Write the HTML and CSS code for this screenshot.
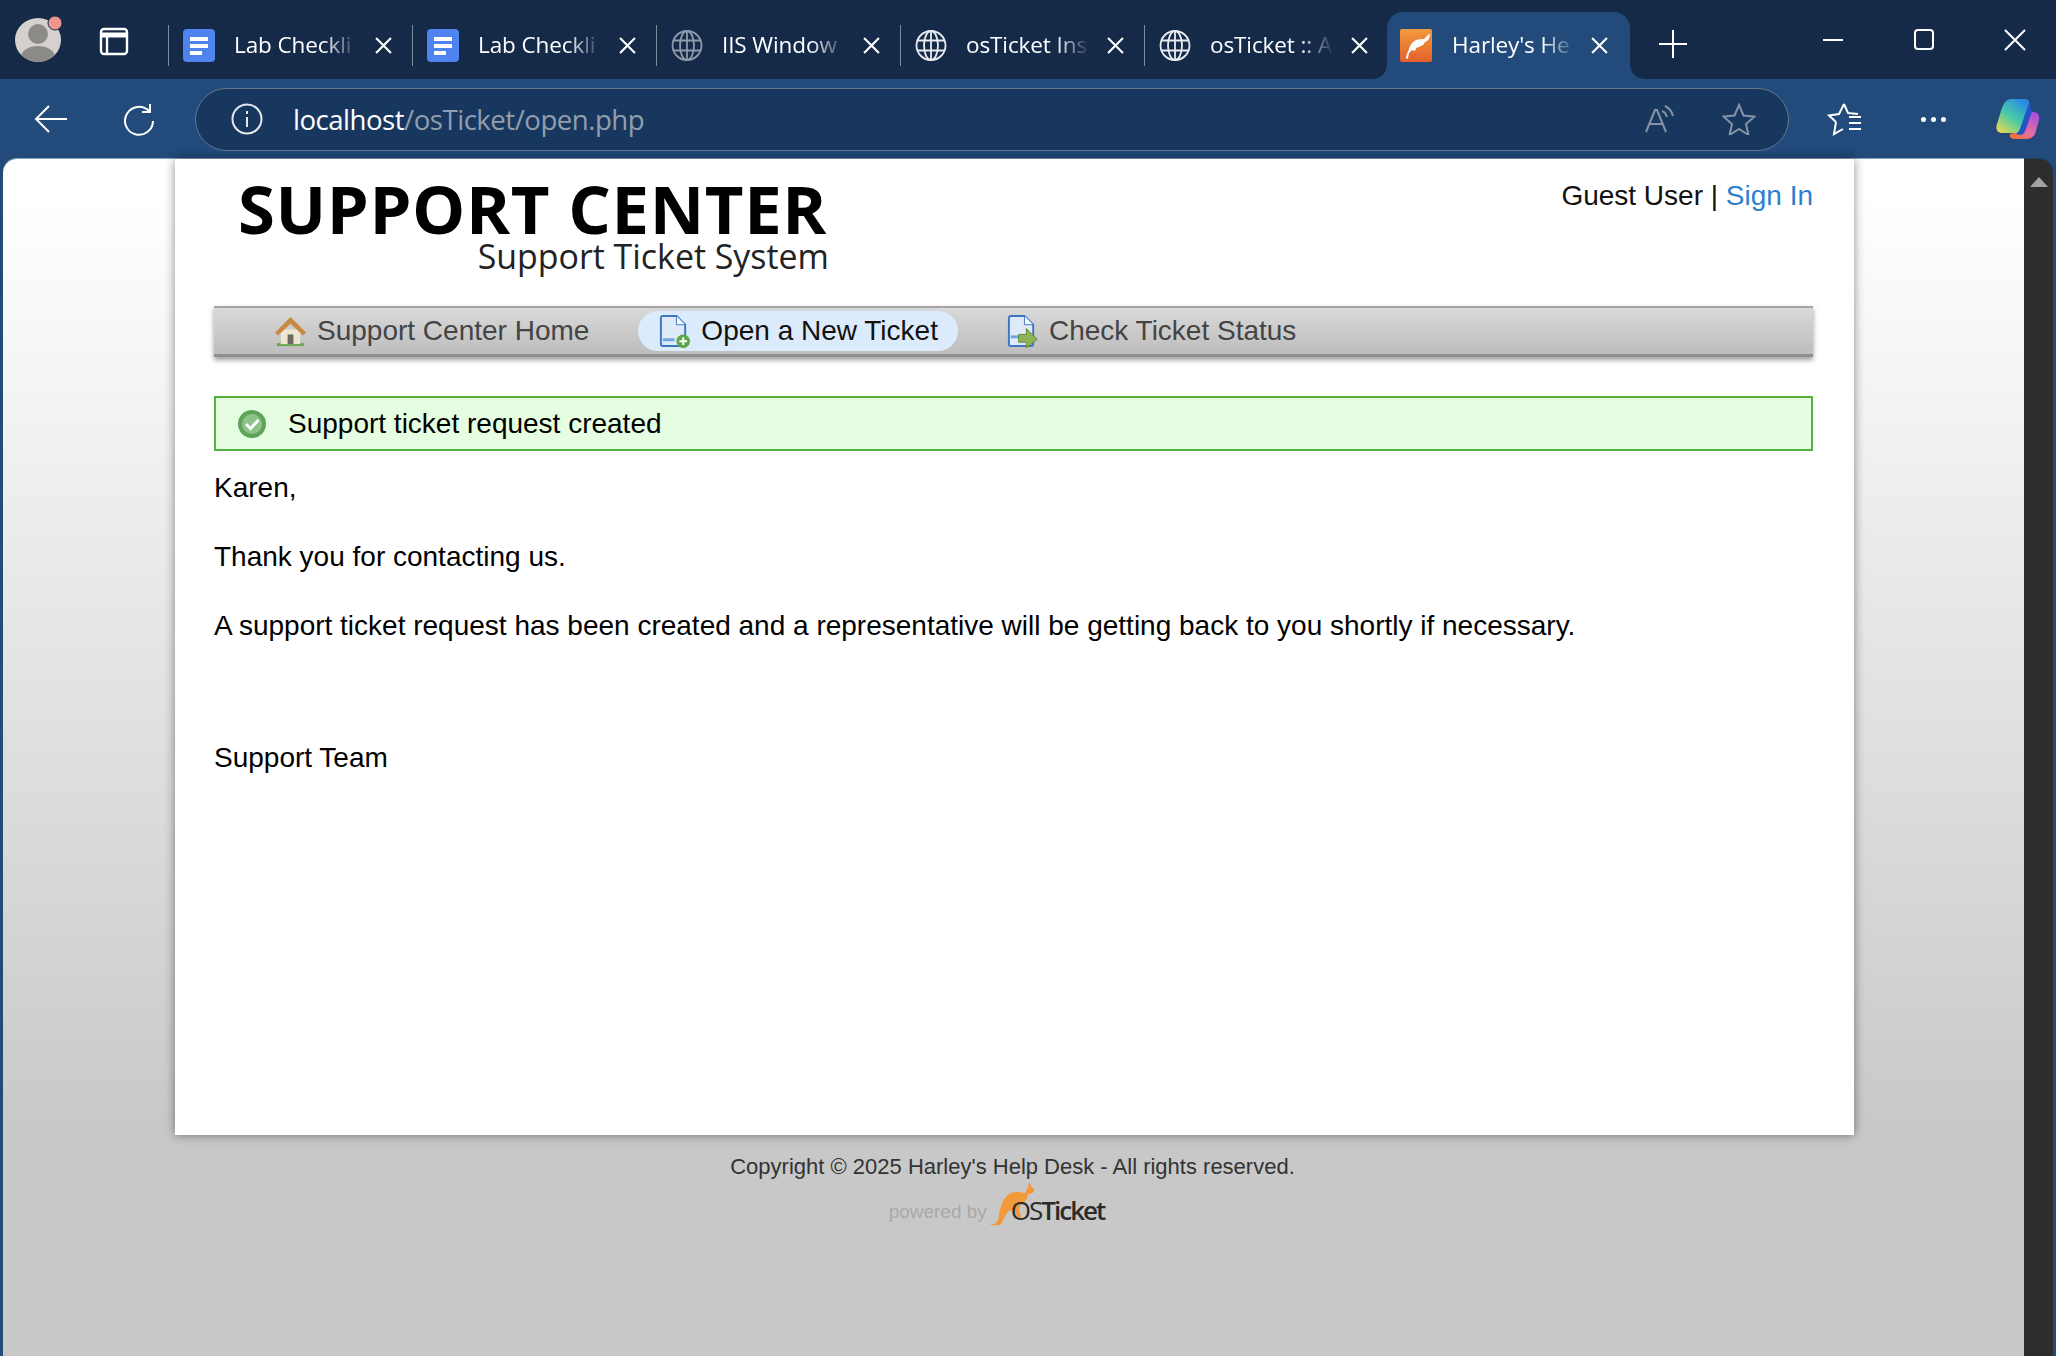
FILE: index.html
```html
<!DOCTYPE html>
<html lang="en">
<head>
    <meta charset="UTF-8">
    <title>Harley's Help Desk</title>
    <link rel="stylesheet" href="styles.css">
</head>
<body>
    <div class="tabstrip">
        <div class="strip-left">
            <svg class="avatar" viewBox="0 0 50 48">
                <defs><clipPath id="av"><ellipse cx="23" cy="26" rx="23" ry="22"/></clipPath></defs>
                <ellipse cx="23" cy="26" rx="23" ry="22" fill="#d5d2cd"/>
                <g clip-path="url(#av)" fill="#8d8b88">
                    <circle cx="23" cy="20" r="10"/>
                    <ellipse cx="23" cy="43" rx="17" ry="11"/>
                </g>
                <circle cx="40" cy="9" r="7" fill="#f0958c" stroke="#152a49" stroke-width="1"/>
            </svg>
            <svg class="layout-icon" viewBox="0 0 30 30" fill="none" stroke="#fff" stroke-width="2.4">
                <rect x="2" y="3" width="26" height="25" rx="3"/>
                <path d="M2 9h26" stroke-width="5"/>
                <path d="M8 9v19"/>
            </svg>
        </div>
        <div class="tab">
            <svg class="favicon" viewBox="0 0 32 33"><rect width="32" height="33" rx="4" fill="#4f83ee"/><path d="M7 8h18v4H7zM7 15h18v4H7zM7 22h12v4H7z" fill="#fff"/></svg>
            <span class="tab-title">Lab Checkli</span>
            <svg class="tab-close" viewBox="0 0 16 16"><path d="M1 1l14 14M15 1L1 15"/></svg>
        </div>
        <div class="tab">
            <svg class="favicon" viewBox="0 0 32 33"><rect width="32" height="33" rx="4" fill="#4f83ee"/><path d="M7 8h18v4H7zM7 15h18v4H7zM7 22h12v4H7z" fill="#fff"/></svg>
            <span class="tab-title">Lab Checkli</span>
            <svg class="tab-close" viewBox="0 0 16 16"><path d="M1 1l14 14M15 1L1 15"/></svg>
        </div>
        <div class="tab">
            <svg class="favicon globe dim" viewBox="0 0 32 32"><circle cx="16" cy="16" r="14.5"/><ellipse cx="16" cy="16" rx="7" ry="14.5"/><path d="M16 1.500v29M2.500 11h27M2.500 21h27"/></svg>
            <span class="tab-title">IIS Window</span>
            <svg class="tab-close" viewBox="0 0 16 16"><path d="M1 1l14 14M15 1L1 15"/></svg>
        </div>
        <div class="tab">
            <svg class="favicon globe" viewBox="0 0 32 32"><circle cx="16" cy="16" r="14.5"/><ellipse cx="16" cy="16" rx="7" ry="14.5"/><path d="M16 1.500v29M2.500 11h27M2.500 21h27"/></svg>
            <span class="tab-title">osTicket Ins</span>
            <svg class="tab-close" viewBox="0 0 16 16"><path d="M1 1l14 14M15 1L1 15"/></svg>
        </div>
        <div class="tab">
            <svg class="favicon globe" viewBox="0 0 32 32"><circle cx="16" cy="16" r="14.5"/><ellipse cx="16" cy="16" rx="7" ry="14.5"/><path d="M16 1.500v29M2.500 11h27M2.500 21h27"/></svg>
            <span class="tab-title">osTicket :: A</span>
            <svg class="tab-close" viewBox="0 0 16 16"><path d="M1 1l14 14M15 1L1 15"/></svg>
        </div>
        <div class="tab tab-active">
            <svg class="favicon" viewBox="0 0 32 33">
                <defs><linearGradient id="fav" x1="0" y1="0" x2="0" y2="1"><stop offset="0" stop-color="#f29a3e"/><stop offset="1" stop-color="#e5602c"/></linearGradient></defs>
                <rect width="32" height="33" rx="2" fill="url(#fav)"/>
                <path d="M6 29c0-3 2-6 3-9 1-4 3-7 7-9 3-1 6-1 8-1l5-5 1 1-1 3c0 2-2 3-4 4l-2 3-4 2-3 1-1 3-3-1-3 3-1 5c0 1-2 1-2 0z" fill="#fff"/>
            </svg>
            <span class="tab-title">Harley's He</span>
            <svg class="tab-close" viewBox="0 0 16 16"><path d="M1 1l14 14M15 1L1 15"/></svg>
        </div>
        <svg class="new-tab" viewBox="0 0 30 30"><path d="M15 1v28M1 15h28"/></svg>
        <div class="window-controls">
            <svg viewBox="0 0 22 22"><path d="M1 11h20"/></svg>
            <svg viewBox="0 0 22 22"><rect x="2" y="1" width="18" height="19" rx="3"/></svg>
            <svg viewBox="0 0 22 22"><path d="M1 1l20 20M21 1L1 21"/></svg>
        </div>
    </div>

    <div class="toolbar">
        <svg class="tool back" viewBox="0 0 34 30"><path d="M33 15H2M15 2L2 15l13 13"/></svg>
        <svg class="tool reload" viewBox="0 0 34 34"><path d="M27 9a14 14 0 1 0 4 10M28 2v8h-8"/></svg>
        <div class="address">
            <svg class="info" viewBox="0 0 32 32"><circle cx="16" cy="16" r="14.500"/><path d="M16 14v10M16 8v3"/></svg>
            <span class="url"><b>localhost</b>/osTicket/open.php</span>
            <svg class="read-aloud" viewBox="0 0 32 30"><path d="M2 28L11 6h2l9 22M5 20h14M18 7c3 1 4 3 5 6M21 2c4 2 7 5 8 10"/></svg>
            <svg class="star" viewBox="0 0 34 32"><path d="M17 2l4.500 10.500 11 1-8.500 7.500 2.500 11-9.500-6-9.500 6 2.500-11L1.500 13.500l11-1z"/></svg>
        </div>
        <svg class="tool favs" viewBox="0 0 36 34"><path d="M17 2l4 9 10 1M9 20l-7-6.500 10-1.500 5-10M9 20l-2 12 9-5M22 15h12M22 21h12M22 27h12"/></svg>
        <div class="more"><i></i><i></i><i></i></div>
        <svg class="copilot" viewBox="0 0 44 42">
            <defs>
                <linearGradient id="cpa" x1="0.8" y1="0" x2="0.1" y2="1"><stop offset="0" stop-color="#2a86e8"/><stop offset=".5" stop-color="#45c9a8"/><stop offset="1" stop-color="#eadb4e"/></linearGradient>
                <linearGradient id="cpb" x1="0.8" y1="0" x2="0.1" y2="1"><stop offset="0" stop-color="#a450e0"/><stop offset=".6" stop-color="#e96f9c"/><stop offset="1" stop-color="#f0702c"/></linearGradient>
            </defs>
            <path d="M30 14h7c5 0 7 3 6 8l-3 11c-1 5-5 8-10 8H19c-4 0-6-2-5-5l9-2z" fill="url(#cpb)"/>
            <path d="M15 1h13c5 0 6 3 5 6l-8 23c-1 3-3 5-7 5H7c-5 0-8-3-6-9l4-13C7 6 10 1 15 1z" fill="url(#cpa)"/>
            <path d="M33 5l-9 26c-1 2-2 4-4 5l5 1c3-1 4-3 5-6l6-18z" fill="#2355c4"/>
        </svg>
    </div>

    <div class="viewport">
        <div class="page">
            <div class="sheet">
                <div class="header">
                    <div class="logo">
                        <div class="logo-title">SUPPORT CENTER</div>
                        <div class="logo-sub">Support Ticket System</div>
                    </div>
                    <div class="user-links">Guest User | <a href="#">Sign In</a></div>
                </div>
                <ul class="nav">
                    <li class="nav-item">
                        <svg viewBox="0 0 34 32">
                            <path d="M3 28h28v3H3z" fill="#6aa84f"/>
                            <path d="M7 14h20v15H7z" fill="#efe6d2"/>
                            <path d="M14 19h6v10h-6z" fill="#6f6a60"/>
                            <path d="M17 1L1 17l3 3L17 8l13 12 3-3z" fill="#c98a43"/>
                        </svg>
                        Support Center Home
                    </li>
                    <li class="nav-item active">
                        <svg viewBox="0 0 32 34">
                            <path d="M2 3a2 2 0 0 1 2-2h14l9 9v20a2 2 0 0 1-2 2H4a2 2 0 0 1-2-2z" fill="#dfeaf8" stroke="#3f76c4" stroke-width="2"/>
                            <path d="M18 1v9h9" fill="#f7fbff" stroke="#3f76c4"/>
                            <path d="M4 24h12v3H4z" fill="#6aa3e6"/>
                            <circle cx="25" cy="27" r="7" fill="#5aa845"/>
                            <path d="M25 23v8M21 27h8" stroke="#fff" stroke-width="2"/>
                        </svg>
                        Open a New Ticket
                    </li>
                    <li class="nav-item">
                        <svg viewBox="0 0 32 34">
                            <path d="M2 3a2 2 0 0 1 2-2h14l9 9v20a2 2 0 0 1-2 2H4a2 2 0 0 1-2-2z" fill="#dfeaf8" stroke="#3f76c4" stroke-width="2"/>
                            <path d="M18 1v9h9" fill="#f7fbff" stroke="#3f76c4"/>
                            <path d="M4 21h8v3H4z" fill="#6aa3e6"/>
                            <path d="M12 20h8v-6l11 11-11 9v-6h-8z" fill="#8fb257" stroke="#5c8a35"/>
                        </svg>
                        Check Ticket Status
                    </li>
                </ul>
                <div class="notice">
                    <svg viewBox="0 0 30 30">
                        <circle cx="15" cy="15" r="14" fill="#5fa35a"/>
                        <circle cx="15" cy="15" r="10" fill="#8cc487"/>
                        <path d="M9 15l4.500 4.500L21.500 11" fill="none" stroke="#fff" stroke-width="3"/>
                    </svg>
                    Support ticket request created
                </div>
                <p class="first">Karen,</p>
                <p>Thank you for contacting us.</p>
                <p>A support ticket request has been created and a representative will be getting back to you shortly if necessary.</p>
                <p class="sign-off">Support Team</p>
            </div>
            <div class="footer">
                <p class="copyright">Copyright © 2025 Harley's Help Desk - All rights reserved.</p>
                <div class="powered">
                    <span class="powered-by">powered by</span>
                    <svg class="roo" viewBox="0 0 46 44" preserveAspectRatio="none"><path d="M0 41c4 1 6-1 7-6 1-8 3-17 9-22 5-4 11-3 15-1l3-6 1-5 2 4 3 3-1 3-5 2c-1 5-3 8-7 10l-1 5 2 7-3 1-3-7c-2 0-3-1-5-1-3 3-5 7-7 12-1 2-2 3-10 2z" fill="#f29a3a"/></svg>
                    <span class="os-name"><i>OS</i>Ticket</span>
                </div>
            </div>
        </div>
        <div class="scrollbar"><span class="scroll-up"></span></div>
    </div>
</body>
</html>
```

FILE: styles.css
```css
html, body {
    height: 100%;
}

body {
    margin: 0;
    height: 1356px;
    overflow: hidden;
    display: flex;
    flex-direction: column;
    background-color: #224a7a;
    font-family: "Liberation Sans", Arial, sans-serif;
}

/* browser tabs */
.tabstrip {
    height: 79px;
    flex: none;
    display: flex;
    background-color: #152a49;
    color: #fff;
}

.strip-left {
    width: 168px;
    flex: none;
    display: flex;
    align-items: center;
    padding: 0 0 0 15px;
    box-sizing: border-box;
}

.avatar {
    width: 50px;
    height: 48px;
    margin-top: -4px;
}

.layout-icon {
    width: 30px;
    height: 30px;
    margin-left: 34px;
    margin-top: 3px;
}

.tab {
    width: 244px;
    flex: none;
    height: 67px;
    margin-top: 12px;
    box-sizing: border-box;
    position: relative;
    display: flex;
    align-items: center;
    font-family: "Open Sans", sans-serif;
    font-size: 22.5px;
    letter-spacing: -0.1px;
}

.tab::before {
    content: "";
    position: absolute;
    left: 0;
    top: 13px;
    height: 41px;
    width: 1px;
    background-color: #7c8a9c;
}

.favicon {
    width: 32px;
    height: 33px;
    margin-left: 15px;
    flex: none;
}

.globe {
    fill: none;
    stroke: #e8ebef;
    stroke-width: 1.8;
}

.globe.dim {
    stroke: #8e9aaa;
}

.tab-title {
    width: 124px;
    margin: -2px 0 0 19px;
    flex: none;
    white-space: nowrap;
    -webkit-mask-image: linear-gradient(to right, #000 72%, transparent 100%);
    mask-image: linear-gradient(to right, #000 72%, transparent 100%);
}

.tab-close {
    width: 17px;
    height: 17px;
    margin-left: 17px;
    fill: none;
    stroke: #fff;
    stroke-width: 2;
}

.tab-active {
    width: 243px;
    margin-left: -1px;
    background-color: #224a7a;
    border-radius: 16px 16px 0 0;
}

.tab-active .favicon {
    margin-left: 13px;
}

.tab-active .tab-title {
    margin-left: 20px;
}

.tab-active .tab-close {
    margin-left: 15px;
}

/* rounded corners where the active tab meets the toolbar */
.tab-active::before,
.tab-active::after {
    content: "";
    display: block;
    position: absolute;
    top: auto;
    bottom: 0;
    width: 14px;
    height: 14px;
}

.tab-active::before {
    left: -14px;
    background: radial-gradient(circle at 0 0, #152a49 13.500px, #224a7a 14px);
}

.tab-active::after {
    right: -14px;
    background: radial-gradient(circle at 100% 0, #152a49 13.500px, #224a7a 14px);
}

.new-tab {
    width: 30px;
    height: 30px;
    margin: 29px 0 0 28px;
    fill: none;
    stroke: #fff;
    stroke-width: 2;
}

.window-controls {
    margin-left: auto;
    width: 234px;
    display: flex;
    justify-content: space-between;
    padding: 29px 30px 0 0;
    box-sizing: border-box;
}

.window-controls svg {
    width: 22px;
    height: 22px;
    fill: none;
    stroke: #fff;
    stroke-width: 2;
}

/* address bar row */
.toolbar {
    height: 80px;
    flex: none;
    display: flex;
    align-items: center;
    background-color: #224a7a;
    box-sizing: border-box;
    padding-left: 34px;
}

.tool {
    fill: none;
    stroke: #fff;
    stroke-width: 2;
}

.back {
    width: 34px;
    height: 30px;
}

.reload {
    width: 34px;
    height: 34px;
    margin-left: 54px;
}

.address {
    width: 1594px;
    height: 63px;
    margin-left: 39px;
    flex: none;
    box-sizing: border-box;
    display: flex;
    align-items: center;
    padding-left: 35px;
    background-color: #17375f;
    border: 1.5px solid #66788f;
    border-radius: 32px;
}

.info {
    width: 32px;
    height: 32px;
    fill: none;
    stroke: #e6e9ee;
    stroke-width: 2;
}

.url {
    margin-left: 30px;
    font-family: "Open Sans", sans-serif;
    font-size: 27.6px;
    letter-spacing: -0.5px;
    color: #929eac;
}

.url b {
    font-weight: 400;
    color: #fff;
}

.read-aloud {
    width: 32px;
    height: 30px;
    margin-left: auto;
    fill: none;
    stroke: #8593a4;
    stroke-width: 2;
}

.star {
    width: 34px;
    height: 32px;
    margin: 0 32px 0 46px;
    fill: none;
    stroke: #8593a4;
    stroke-width: 2;
}

.favs {
    width: 36px;
    height: 34px;
    margin-left: 38px;
}

.more {
    margin-left: 58px;
    display: flex;
    gap: 5px;
}

.more i {
    width: 5px;
    height: 5px;
    border-radius: 50%;
    background-color: #fff;
}

.copilot {
    width: 44px;
    height: 42px;
    margin-left: 50px;
}

/* web page area */
.viewport {
    flex: 1;
    min-height: 0;
    display: flex;
    padding: 0 3px 0 3px;
}

.page {
    flex: 1;
    border-top-left-radius: 14px;
    background: linear-gradient(#fff 0, #fff 40px, #c8c8c8 980px);
    box-shadow: 0 -1px 0 #8ba0ba;
    color: #000;
}

.scrollbar {
    width: 29px;
    flex: none;
    background-color: #2d2d2d;
    border-top-right-radius: 14px;
    box-shadow: 0 -1px 0 #1d3c64;
    display: flex;
    justify-content: center;
}

.scroll-up {
    margin-top: 18px;
    width: 0;
    height: 0;
    border-left: 9px solid transparent;
    border-right: 9px solid transparent;
    border-bottom: 10px solid #a3a3a3;
}

.sheet {
    width: 1679px;
    height: 976px;
    margin-left: 172px;
    box-sizing: border-box;
    padding: 0 41px 0 39px;
    background-color: #fff;
    box-shadow: 0 0 10px rgba(0, 0, 0, 0.45);
    font-size: 28px;
}

.header {
    height: 147px;
    display: flex;
    justify-content: space-between;
}

.logo {
    margin-left: 24px;
    padding-top: 15px;
    width: 591px;
    font-family: "Open Sans", sans-serif;
    color: #000;
    text-align: right;
}

.logo-title {
    font-size: 67px;
    font-weight: 700;
    line-height: 68px;
    letter-spacing: 0.6px;
    text-align: left;
    white-space: nowrap;
}

.logo-sub {
    font-size: 33.9px;
    line-height: 30px;
    margin-top: -1px;
    color: #222;
}

.user-links {
    padding-top: 21px;
    line-height: 32px;
    color: #111;
}

.user-links a {
    color: #2e7fd0;
    text-decoration: none;
}

.nav {
    list-style: none;
    margin: 0;
    height: 51px;
    box-sizing: border-box;
    padding: 0 0 0 60px;
    display: flex;
    align-items: center;
    border-top: 2px solid #a5a5a5;
    border-bottom: 3px solid #8f8f8f;
    background: linear-gradient(#d9d9d9, #bdbdbd);
    box-shadow: 0 3px 5px rgba(0, 0, 0, 0.4);
}

.nav-item {
    display: flex;
    align-items: center;
    height: 40px;
    padding: 0 20px;
    margin-right: 25px;
    border-radius: 20px;
    color: #444;
    white-space: nowrap;
}

.nav-item:first-child {
    padding: 0;
    margin-right: 49px;
}

.nav-item svg {
    width: 33px;
    height: 33px;
    margin-right: 10px;
}

.nav-item.active {
    padding: 0 20px;
    margin-right: 48px;
    background-color: #dcebfb;
    color: #111;
}

.nav-item:last-child {
    padding: 0;
}

.notice {
    margin-top: 39px;
    height: 55px;
    box-sizing: border-box;
    display: flex;
    align-items: center;
    padding-left: 21px;
    background-color: #e5fde0;
    border: 2px solid #55b140;
}

.notice svg {
    width: 30px;
    height: 30px;
    margin-right: 21px;
}

.sheet p {
    margin: 0;
    line-height: 32px;
    padding-top: 37px;
}

.sheet p.first {
    padding-top: 21px;
}

.sheet p.sign-off {
    padding-top: 100px;
}

.footer {
    padding-top: 19px;
    text-align: center;
    color: #333;
    margin-left: -2px;
}

.copyright {
    margin: 0;
    font-size: 22px;
    line-height: 26px;
}

.powered {
    margin-top: 3px;
    display: flex;
    justify-content: center;
    align-items: flex-end;
    height: 44px;
    padding-right: 32px;
}

.powered-by {
    font-size: 19px;
    color: #a9a9a9;
    line-height: 30px;
}

.roo {
    width: 50px;
    height: 46px;
    margin-left: 4px;
    flex: none;
}

.os-name {
    margin-left: -30px;
    font-family: "Open Sans", sans-serif;
    font-size: 26px;
    line-height: 34px;
    font-weight: 600;
    letter-spacing: -2px;
    color: #2b2b2b;
}

.os-name i {
    font-style: normal;
    font-weight: 400;
}
```
